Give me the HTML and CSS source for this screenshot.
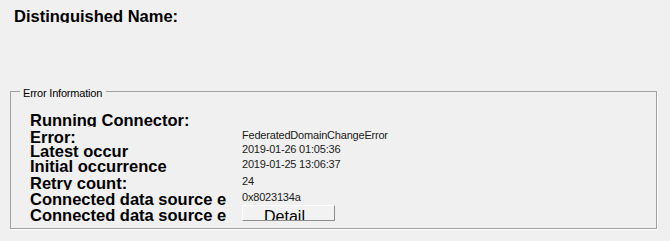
FILE: index.html
```html
<!DOCTYPE html>
<html>
<head>
<meta charset="utf-8">
<link rel="stylesheet" href="styles.css">
</head>
<body>
<div class="dn-title">Distinguished Name:</div>
<section class="group">
  <div class="group-legend">Error Information</div>
  <div class="info-grid">
    <div class="lbl">Running Connector:</div>
    <div class="val"></div>
    <div class="lbl">Error:</div>
    <div class="val">FederatedDomainChangeError</div>
    <div class="lbl">Latest occur</div>
    <div class="val">2019-01-26 01:05:36</div>
    <div class="lbl">Initial occurrence</div>
    <div class="val">2019-01-25 13:06:37</div>
    <div class="lbl">Retry count:</div>
    <div class="val">24</div>
    <div class="lbl">Connected data source e</div>
    <div class="val">0x8023134a</div>
    <div class="lbl">Connected data source e</div>
    <div class="val"><button class="detail-btn" type="button"><span class="btn-text">Detail</span></button></div>
  </div>
</section>
</body>
</html>
```

FILE: styles.css
```css
html, body {
  margin: 0;
  padding: 0;
  background: #f0f0f0;
  width: 670px;
  height: 241px;
  overflow: hidden;
}
body {
  font-family: "Liberation Sans", Arial, sans-serif;
  color: #000;
}
.dn-title {
  margin: 8px 0 0 14px;
  height: 15px;
  overflow: hidden;
  font-weight: bold;
  font-size: 16.5px;
  line-height: 16px;
  white-space: nowrap;
}
.group {
  position: relative;
  margin: 68px 0 0 10px;
  width: 647px;
  box-sizing: border-box;
  padding: 20px 0 5px 19px;
  border: 1px solid #a0a0a0;
  box-shadow: 1px 1px 0 #ffffff;
}
.group-legend {
  position: absolute;
  top: -5px;
  left: 9px;
  padding: 0 4px 0 3px;
  background: #f0f0f0;
  font-size: 11px;
  line-height: 13px;
  letter-spacing: -0.2px;
  color: #000;
  white-space: nowrap;
}
.info-grid {
  display: grid;
  grid-template-columns: 212px auto;
  grid-template-rows: 17px 14px 15px 17px 16px 16px 16px;
}
.lbl {
  font-weight: bold;
  font-size: 16.5px;
  line-height: 16px;
  height: 15px;
  overflow: hidden;
  white-space: nowrap;
}
.val {
  font-size: 11px;
  line-height: 13px;
  letter-spacing: -0.2px;
  white-space: nowrap;
  color: #1a1a1a;
}
.detail-btn {
  display: block;
  margin-top: -2px;
  width: 93px;
  height: 16px;
  padding: 0;
  background: #f2f2f2;
  border-style: solid;
  border-width: 1px;
  border-color: #ffffff #8c8c8c #8c8c8c #ffffff;
  overflow: hidden;
  font-family: "Liberation Sans", Arial, sans-serif;
  font-size: 16px;
  line-height: 16px;
  color: #000;
  text-align: center;
}
.btn-text {
  display: block;
  margin-top: 3px;
  margin-left: -8px;
}
```
